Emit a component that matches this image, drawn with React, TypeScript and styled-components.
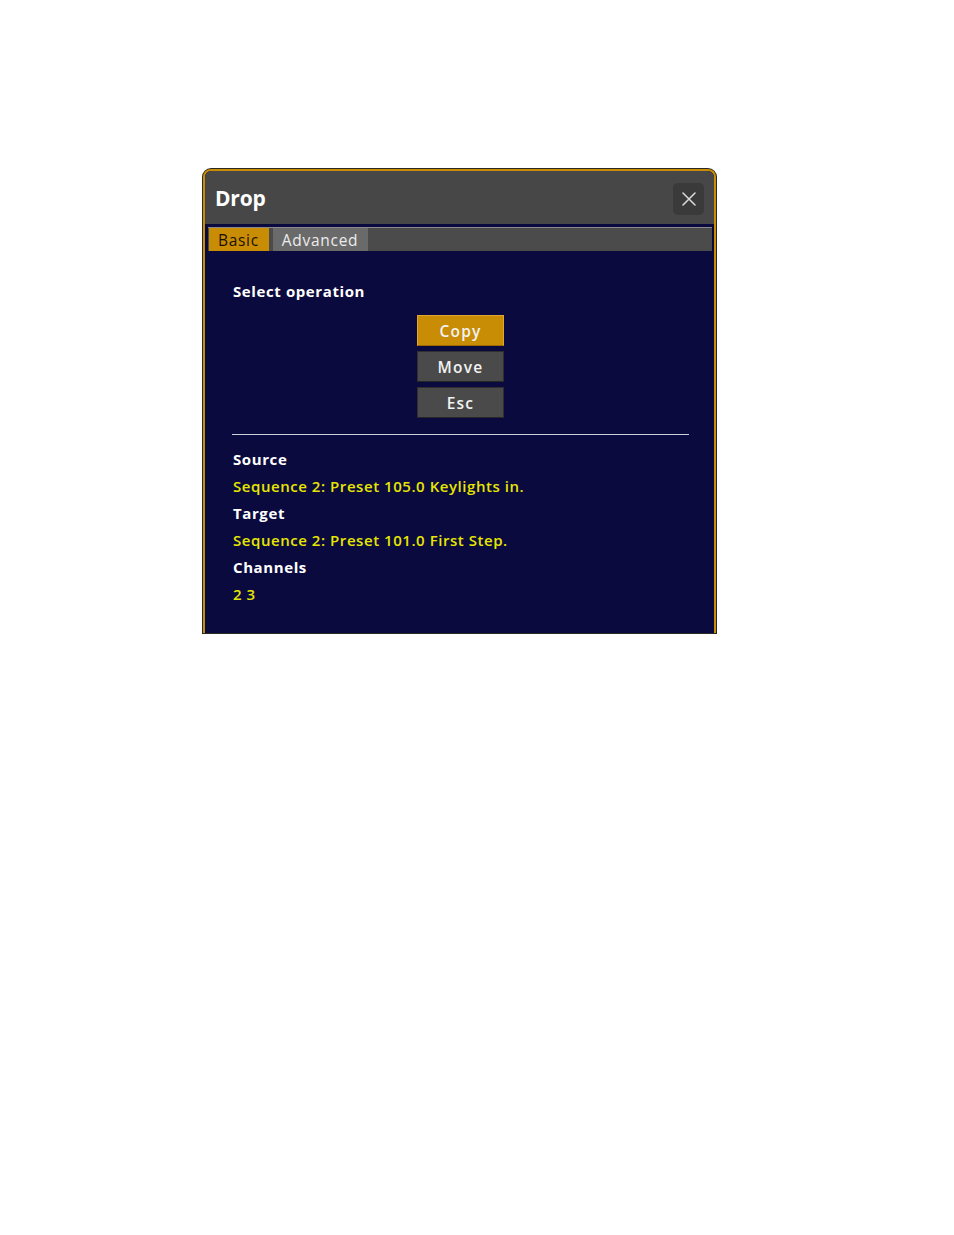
import React from "react";
import styled, { createGlobalStyle } from "styled-components";

const Global = createGlobalStyle`
  html, body { margin: 0; padding: 0; background: #ffffff; }
  body { font-family: "Open Sans", "DejaVu Sans", sans-serif; }
`;

const Page = styled.div`
  padding: 169px 0 0 203px;
  height: 1235px;
  box-sizing: border-box;
`;

const Dialog = styled.div`
  width: 513px;
  height: 464px;
  box-sizing: border-box;
  border: 2px solid #c98c05;
  border-bottom: none;
  border-radius: 8px 8px 0 0;
  box-shadow: 0 0 0 1px #2a2a22;
  background: #0b0a3e;
  display: flex;
  flex-direction: column;
  overflow: hidden;
`;

const TitleBar = styled.div`
  height: 53px;
  flex: none;
  background: #474747;
  display: flex;
  align-items: center;
  justify-content: space-between;
  padding: 0 10px 0 10px;
  border-radius: 6px 6px 0 0;
`;

const Title = styled.h1`
  margin: 0;
  font-family: "Open Sans", sans-serif;
  font-weight: 700;
  font-size: 21px;
  color: #ffffff;
  letter-spacing: -0.2px;
`;

const CloseButton = styled.button`
  width: 31px;
  height: 32px;
  border: none;
  border-radius: 5px;
  background: #3a3a3a;
  display: flex;
  align-items: center;
  justify-content: center;
  padding: 0;
  margin-top: 2px;
`;

const TabBar = styled.div`
  margin: 3px 2px 0 3px;
  height: 24px;
  flex: none;
  background: #4b4b4b;
  border-top: 1px solid #8a8a8a;
  box-sizing: border-box;
  display: flex;
  gap: 4px;
  padding-left: 1px;
`;

const Tab = styled.div<{ $active?: boolean }>`
  height: 100%;
  padding: 0 10px 0 9px;
  display: flex;
  align-items: center;
  background: ${(p) => (p.$active ? "#c98c05" : "#6a6a6a")};
  color: ${(p) => (p.$active ? "#1a1200" : "#ececec")};
  font-family: "Open Sans", sans-serif;
  font-size: 15.5px;
  letter-spacing: 0.7px;
`;

const Body = styled.div`
  padding: 27px 25px 0 28px;
  display: flex;
  flex-direction: column;
`;

const Label = styled.div`
  font-family: "Open Sans", sans-serif;
  font-weight: 700;
  font-size: 15px;
  line-height: 27px;
  color: #ffffff;
  letter-spacing: 0.6px;
`;

const Value = styled.div`
  font-family: "Open Sans", sans-serif;
  font-weight: 600;
  font-size: 15px;
  line-height: 27px;
  color: #e6e600;
  letter-spacing: 0.55px;
`;

const ButtonStack = styled.div`
  display: flex;
  flex-direction: column;
  align-items: center;
  gap: 5px;
  margin-top: 10px;
  padding-right: 1px;
`;

const OpButton = styled.button<{ $primary?: boolean }>`
  width: 87px;
  height: 31px;
  box-sizing: border-box;
  border: 1px solid ${(p) => (p.$primary ? "#e0a631" : "#2f2f2f")};
  border-bottom-color: ${(p) => (p.$primary ? "#9a6a00" : "#262626")};
  background: ${(p) => (p.$primary ? "#c98c05" : "#4a4a4a")};
  color: #f2f2f2;
  font-family: "Open Sans", sans-serif;
  font-weight: 600;
  font-size: 15.5px;
  letter-spacing: 1.2px;
  padding: 0;
`;

const Separator = styled.hr`
  margin: 16px 0 11px -1px;
  border: none;
  border-top: 1px solid #cfcfdc;
  height: 0;
`;

export default function App() {
  return (
    <>
      <Global />
      <Page>
        <Dialog>
          <TitleBar>
            <Title>Drop</Title>
            <CloseButton aria-label="Close">
              <svg width="16" height="16" viewBox="0 0 16 16">
                <path d="M2 2 L14 14 M14 2 L2 14" stroke="#d6d6d6" strokeWidth="1.6" strokeLinecap="round" />
              </svg>
            </CloseButton>
          </TitleBar>
          <TabBar>
            <Tab $active>Basic</Tab>
            <Tab>Advanced</Tab>
          </TabBar>
          <Body>
            <Label>Select operation</Label>
            <ButtonStack>
              <OpButton $primary>Copy</OpButton>
              <OpButton>Move</OpButton>
              <OpButton>Esc</OpButton>
            </ButtonStack>
            <Separator />
            <Label>Source</Label>
            <Value>Sequence 2: Preset 105.0 Keylights in.</Value>
            <Label>Target</Label>
            <Value>Sequence 2: Preset 101.0 First Step.</Value>
            <Label>Channels</Label>
            <Value>2 3</Value>
          </Body>
        </Dialog>
      </Page>
    </>
  );
}
